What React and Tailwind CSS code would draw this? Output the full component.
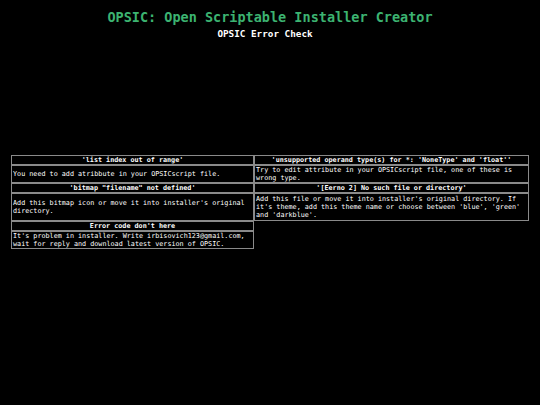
import React from 'react';

const rows = [
  {
    left: { head: "'list index out of range'", body: 'You need to add atribbute in your OPSICscript file.' },
    right: { head: "'unsupported operand type(s) for *: 'NoneType' and 'float''", body: 'Try to edit attribute in your OPSICscript file, one of these is wrong type.' },
  },
  {
    left: { head: '\'bitmap "filename" not defined\'', body: "Add this bitmap icon or move it into installer's original directory." },
    right: { head: "'[Eerno 2] No such file or directory'", body: "Add this file or move it into installer's original directory. If it's theme, add this theme name or choose between 'blue', 'green' and 'darkblue'." },
    tall: true,
  },
  {
    left: { head: "Error code don't here", body: "It's problem in installer. Write irbisovich123@gmail.com, wait for reply and download latest version of OPSIC." },
    right: null,
  },
];

const headCls = 'border border-[#8a8a8a] p-0 text-center font-bold leading-[8px]';
const bodyCls = 'border border-[#8a8a8a] px-[1px] text-left align-middle leading-[8px]';

export default function App() {
  return (
    <div className="w-[540px] h-[405px] bg-black text-white font-['DejaVu_Sans_Mono',monospace] overflow-hidden">
      <div className="pt-[9px] text-center">
        <h1 className="text-[13.5px] leading-[16px] font-bold text-[#3cb371]">
          OPSIC: Open Scriptable Installer Creator
        </h1>
        <h2 className="text-[9.3px] leading-[12px] font-bold mt-[3px] pr-[10px]">OPSIC Error Check</h2>
      </div>

      <div className="mt-[115px] pl-[11px]">
        <table className="border-separate border-spacing-0 text-[6.75px]">
          <tbody>
            {rows.map((r, i) => (
              <React.Fragment key={i}>
                <tr>
                  <td className={`${headCls} w-[243px]`}>{r.left.head}</td>
                  {r.right ? <td className={`${headCls} w-[275px]`}>{r.right.head}</td> : <td />}
                </tr>
                <tr>
                  <td className={`${bodyCls} w-[243px] ${r.tall ? 'py-[1px]' : 'py-0'}`}>{r.left.body}</td>
                  {r.right ? (
                    <td className={`${bodyCls} w-[275px] ${r.tall ? 'py-[1px]' : 'py-0'}`}>{r.right.body}</td>
                  ) : (
                    <td />
                  )}
                </tr>
              </React.Fragment>
            ))}
          </tbody>
        </table>
      </div>
    </div>
  );
}
